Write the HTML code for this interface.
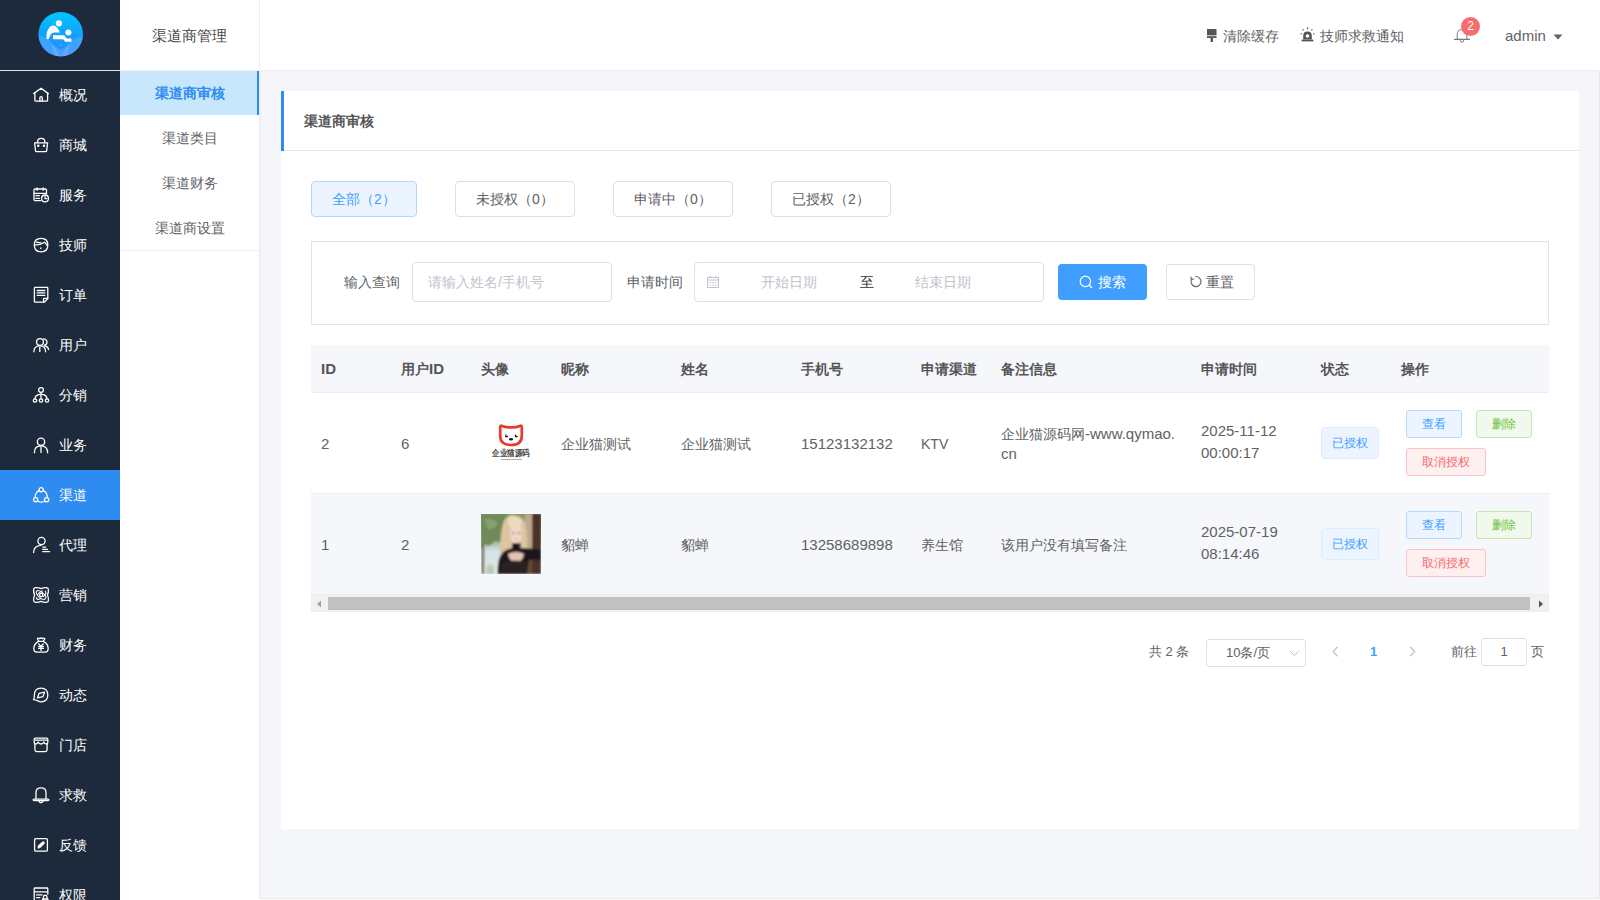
<!DOCTYPE html>
<html><head><meta charset="utf-8">
<style>
*{margin:0;padding:0;box-sizing:border-box}
html,body{width:1600px;height:900px;overflow:hidden;background:#fff;font-family:"Liberation Sans",sans-serif;font-size:14px;color:#606266}
.a{position:absolute;white-space:nowrap}
#side{position:absolute;left:0;top:0;width:120px;height:900px;background:#1d2a3b;overflow:hidden}
#logo{position:absolute;left:0;top:0;width:120px;height:71px;border-bottom:1px solid #e4e4e4}
.mi{position:absolute;left:0;width:120px;height:50px;color:#fff}
.mi.act{background:#2e8bf0}
.mi svg{position:absolute;left:30px;top:14px;width:22px;height:22px;fill:none;stroke:#fff;stroke-width:1.3;stroke-linecap:round;stroke-linejoin:round}
.mi span{position:absolute;left:59px;top:0;line-height:50px;font-size:14px}
#sub{position:absolute;left:120px;top:0;width:140px;height:899px;background:#fff;border-right:1px solid #eee}
#subhd{position:absolute;left:0;top:0;width:139px;height:71px;border-bottom:1px solid #eee;text-align:center;line-height:72px;font-size:15px;color:#4a4a4a}
.si{position:absolute;left:0;width:139px;height:45px;line-height:45px;text-align:center;color:#606266;font-size:14px}
.si.act{background:#c9e7fc;color:#2e8bf0;height:44px;line-height:44px;font-weight:bold}
.si.act:after{content:"";position:absolute;right:0;top:0;width:2px;height:44px;background:#2e8bf0}
#subend{position:absolute;left:0;top:250px;width:139px;height:1px;background:#eee}
#top{position:absolute;left:260px;top:0;width:1340px;height:71px;background:#fff;border-bottom:1px solid #eee}
#main{position:absolute;left:260px;top:71px;width:1340px;height:828px;border-left:1px solid #efefef;border-right:1px solid #e8e8e8;border-bottom:1px solid #e8e8e8;background:#f4f6f9}
#card{position:absolute;left:281px;top:91px;width:1298px;height:738px;background:#fff}
#cardhd{position:absolute;left:0;top:0;width:1298px;height:60px;border-bottom:1px solid #e6e6e6}
#cardhd:before{content:"";position:absolute;left:0;top:0;width:3px;height:60px;background:#2e8bf0}
.tab{position:absolute;top:90px;height:36px;border:1px solid #dcdfe6;border-radius:4px;text-align:center;line-height:34px;color:#606266;font-size:14px;background:#fff}
.tab.act{background:#ecf5ff;border-color:#b3d8ff;color:#409eff}
.inp{position:absolute;border:1px solid #dcdfe6;border-radius:4px;background:#fff}
.btn{position:absolute;border-radius:4px;text-align:center;font-size:14px}
.th{position:absolute;top:0;line-height:48px;font-weight:bold;color:#555;font-size:14px}
.td{position:absolute;color:#606266;font-size:14px;line-height:18px}
i.L{font-style:normal;font-size:15px}
.sb{position:absolute;height:28px;line-height:26px;border-radius:3px;font-size:12px;text-align:center;border:1px solid}
.sb.v{background:#ecf5ff;border-color:#b3d8ff;color:#409eff}
.sb.d{background:#f0f9eb;border-color:#c2e7b0;color:#67c23a}
.sb.c{background:#fef0f0;border-color:#fbc4c4;color:#f56c6c}
.tag{position:absolute;width:58px;height:32px;line-height:30px;border:1px solid #d9ecff;background:#ecf5ff;color:#409eff;border-radius:4px;font-size:12px;text-align:center}
</style></head><body>
<div id="side">
  <div id="logo">
    <svg class="a" style="left:34px;top:8px" width="54" height="54" viewBox="0 0 54 54">
      <defs>
        <linearGradient id="lg" x1="0" y1="0" x2="0" y2="1"><stop offset="0" stop-color="#00c8fe"/><stop offset="0.55" stop-color="#159cff"/><stop offset="1" stop-color="#2f8dff"/></linearGradient>
        <clipPath id="cc"><circle cx="26.7" cy="26.25" r="22.3"/></clipPath>
      </defs>
      <circle cx="26.7" cy="26.25" r="22.3" fill="url(#lg)"/>
      <g clip-path="url(#cc)">
      <path d="M3 27.8 Q14 28.5 19 36 Q23 43 26.7 49 L0 49 Z" fill="#ffffff" opacity="0.13"/>
      <path d="M50.4 27.8 Q39.4 28.5 34.4 36 Q30.4 43 26.7 49 L54 49 Z" fill="#ffffff" opacity="0.13"/>
      <path d="M17.8 36.5 L26.7 41.8 L35.6 36.5 L33 49 L20.4 49Z" fill="#ffffff" opacity="0.14"/>
      <path d="M25.6 37.6 L26.7 35.8 L27.8 37.6Z" fill="#ffffff" opacity="0.35"/>
      </g>
      <circle cx="24.9" cy="15.3" r="3.1" fill="#fff"/>
      <circle cx="34.4" cy="24.6" r="3.0" fill="#fff"/>
      <path d="M12.4 30.6 Q12 23 15.8 19 Q18.6 16.6 21.6 18.2 Q24 19.6 26 24.4 L20 24.4 Q17.6 24.6 16.4 27 L14.8 30.8 Q13.6 31.6 12.4 30.6Z" fill="#fff"/>
      <path d="M19 27.2 L30.4 27.2 L32.6 30.4 L37.4 30.4 L37.4 33.8 L31.4 33.8 L29 31.2 L19 31.2Z" fill="#fff"/>
    </svg>
  </div>
  <div class="mi" style="top:70px"><svg viewBox="0 0 22 22"><path d="M3.6 9.6 L11 4.2 L18.4 9.6"/><path d="M4.9 9.2 V16.2 Q4.9 17.2 5.9 17.2 H16.6 Q17.6 17.2 17.6 16.2 V9.2"/><path d="M9.9 17.2 V13.6 Q9.9 12.6 11.1 12.6 Q12.3 12.6 12.3 13.6 V17.2"/></svg><span>概况</span></div>
  <div class="mi" style="top:120px"><svg viewBox="0 0 22 22"><path d="M7.6 8.6 V7.8 Q7.6 4.4 11.2 4.4 Q14.8 4.4 14.8 7.8 V8.6"/><path d="M4.6 8.8 H17.6 L16.7 16.6 Q16.6 17.6 15.6 17.6 H6.6 Q5.6 17.6 5.5 16.6Z"/><circle cx="8.3" cy="11.7" r="0.6" fill="#fff"/><circle cx="14" cy="11.7" r="0.6" fill="#fff"/></svg><span>商城</span></div>
  <div class="mi" style="top:170px"><svg viewBox="0 0 22 22"><path d="M10.5 16.6 H5 Q4 16.6 4 15.6 V6 Q4 5 5 5 H15.5 Q16.5 5 16.5 6 V10"/><path d="M4 9.3 H15.5"/><path d="M7.1 3.8 V6.3 M13.1 3.8 V6.3"/><path d="M5.9 11.7 H9.4 M5.9 14.4 H9.4"/><circle cx="15" cy="14.4" r="3.4"/><path d="M15 12.4 V14.6 H16.8"/></svg><span>服务</span></div>
  <div class="mi" style="top:220px"><svg viewBox="0 0 22 22"><path d="M11 4.3 C16 4.3 17.8 6.5 17.8 11 C17.8 15.8 15.8 17.8 11 17.8 C6.2 17.8 4.3 15.8 4.3 11 C4.3 6.5 6 4.3 11 4.3Z"/><path d="M5 10.8 Q9 11.6 14.5 8.2 Q16 10 16.8 11"/><path d="M6.5 8.2 L11 8.8"/><path d="M10.8 13.8 V14.6"/></svg><span>技师</span></div>
  <div class="mi" style="top:270px"><svg viewBox="0 0 22 22"><path d="M14.2 18.2 H5.2 Q4.4 18.2 4.4 17.4 V4.2 Q4.4 3.4 5.2 3.4 H17 Q17.8 3.4 17.8 4.2 V14.6Z"/><path d="M13.6 18 V14.4 H17.6"/><path d="M7.2 6.5 H14.8 M7.2 8.9 H14.8 M7.2 11.4 H14.8"/></svg><span>订单</span></div>
  <div class="mi" style="top:320px"><svg viewBox="0 0 22 22"><circle cx="10" cy="8" r="3.4"/><path d="M3.9 17.8 Q3.9 11.8 9.8 11.8 Q15.6 11.8 15.6 17.8"/><path d="M9.8 13.4 V17.4"/><path d="M13.6 4.9 Q17 5.2 17 8.3 Q17 10.8 14.2 11.4"/><path d="M14.8 12 Q18.4 12.8 18.5 15.6"/></svg><span>用户</span></div>
  <div class="mi" style="top:370px"><svg viewBox="0 0 22 22"><circle cx="11" cy="6" r="2.4"/><path d="M11 8.4 V14.8"/><path d="M5 14.8 Q5.2 10.4 11 10.4 Q16.8 10.4 17 14.8"/><circle cx="5" cy="16.5" r="1.7"/><circle cx="11" cy="16.5" r="1.7"/><circle cx="17" cy="16.5" r="1.7"/></svg><span>分销</span></div>
  <div class="mi" style="top:420px"><svg viewBox="0 0 22 22"><circle cx="11" cy="7.8" r="3.7"/><path d="M4.4 18.8 Q4.4 11.8 11 11.8 Q17.6 11.8 17.6 18.8"/><path d="M11 13.4 V18.6"/></svg><span>业务</span></div>
  <div class="mi act" style="top:470px"><svg viewBox="0 0 22 22"><circle cx="11.2" cy="5.8" r="2.1"/><circle cx="5.7" cy="15.8" r="2.1"/><circle cx="16.6" cy="15.8" r="2.1"/><path d="M8.9 6.6 Q5.2 8.6 5.1 13.6"/><path d="M13.5 6.6 Q17.3 8.6 17.3 13.6"/><path d="M7.8 17.2 Q11.2 19.2 14.5 17.2"/></svg><span>渠道</span></div>
  <div class="mi" style="top:520px"><svg viewBox="0 0 22 22"><circle cx="11.5" cy="7" r="3.6"/><path d="M3.6 18.6 Q3.6 11.8 11 11.3"/><path d="M12.8 13.1 H15.6 M12.8 15.4 H17.4 M12.8 17.6 H19.6"/></svg><span>代理</span></div>
  <div class="mi" style="top:570px"><svg viewBox="0 0 22 22"><path d="M5.5 3.6 Q8.5 3.4 11 4.6 Q13.5 3.4 16.5 3.6 Q18.4 3.8 18.4 5.8 Q18.6 8.5 17.4 11 Q18.6 13.5 18.4 16.2 Q18.4 18.2 16.5 18.4 Q13.5 18.6 11 17.4 Q8.5 18.6 5.5 18.4 Q3.6 18.2 3.6 16.2 Q3.4 13.5 4.6 11 Q3.4 8.5 3.6 5.8 Q3.6 3.8 5.5 3.6Z"/><circle cx="11.2" cy="11" r="1.6"/><ellipse cx="11" cy="11" rx="5.8" ry="2.8" transform="rotate(40 11 11)" stroke-width="1.1"/><ellipse cx="11" cy="11" rx="5.8" ry="2.8" transform="rotate(-40 11 11)" stroke-width="1.1" stroke-dasharray="6 3"/></svg><span>营销</span></div>
  <div class="mi" style="top:620px"><svg viewBox="0 0 22 22"><path d="M8.6 7.2 L7.4 4.6 Q8.6 3.6 9.6 4.6 Q11 3.4 12.4 4.6 Q13.6 3.6 14.8 4.6 L13.4 7.2"/><path d="M8.6 7.4 H13.4"/><path d="M8.6 7.4 Q3.8 10 3.8 14.6 Q3.8 18.2 7 18.2 H15 Q18.2 18.2 18.2 14.6 Q18.2 10 13.4 7.4"/><path d="M8.8 10 L11 12.4 L13.2 10 M8.6 12.6 H13.4 M8.6 14.4 H13.4 M11 12.4 V16.6"/></svg><span>财务</span></div>
  <div class="mi" style="top:670px"><svg viewBox="0 0 22 22"><path d="M3.4 15.6 Q4.6 14.2 4.4 11 Q4.4 4.2 11 4.2 Q17.8 4.2 17.8 11 Q17.8 17.8 11 17.8 Q8.5 17.8 7.2 16.6 Q5.8 15.8 3.4 15.6Z"/><path d="M7.6 13.8 L9 9.4 L14.6 8.2 L13 12.6Z"/></svg><span>动态</span></div>
  <div class="mi" style="top:720px"><svg viewBox="0 0 22 22"><path d="M5.2 4.2 H16.8 Q17.8 4.2 17.8 5.2 V8.6 Q17.8 10 16.4 10 Q14.4 10 13.8 8 Q13 10 11 10 Q9 10 8.2 8 Q7.6 10 5.6 10 Q4.2 10 4.2 8.6 V5.2 Q4.2 4.2 5.2 4.2Z"/><path d="M5.4 6.2 H16.6"/><path d="M4.9 10 V15.8 Q4.9 17.6 6.7 17.6 H15.3 Q17.1 17.6 17.1 15.8 V10"/></svg><span>门店</span></div>
  <div class="mi" style="top:770px"><svg viewBox="0 0 22 22"><path d="M6 14.8 V8.6 Q6 3.8 11 3.8 Q16 3.8 16 8.6 V14.8"/><path d="M4 15.2 Q3 15.2 3.2 16 Q3.4 16.6 4.2 16.6 H17.8 Q18.6 16.6 18.8 16 Q19 15.2 18 15.2Z"/><path d="M9 16.6 Q9 18.6 11 18.6 Q13 18.6 13 16.6"/></svg><span>求救</span></div>
  <div class="mi" style="top:820px"><svg viewBox="0 0 22 22"><rect x="4.6" y="4.6" width="12.8" height="12.6" rx="1.2"/><path d="M8.2 13.8 L8.4 12 L12.6 8.2 Q13.4 7.6 14 8.3 Q14.5 9 13.8 9.6 L9.8 13.6Z" fill="#fff"/></svg><span>反馈</span></div>
  <div class="mi" style="top:870px"><svg viewBox="0 0 22 22"><path d="M11 17 H5 Q4.2 17 4.2 16.2 V4.8 Q4.2 4 5 4 H17 Q17.8 4 17.8 4.8 V10"/><path d="M4.6 7.8 H17.4"/><path d="M6.6 10.9 H12 M6.6 13.7 H9.8"/><path d="M13.4 15 V13.4 Q13.4 11.2 15.2 11.2 Q17 11.2 17 13.4 V15"/><rect x="12.4" y="15" width="5.6" height="4" rx="0.6"/></svg><span>权限</span></div>
</div>
<div id="sub">
  <div id="subhd">渠道商管理</div>
  <div class="si act" style="top:71px">渠道商审核</div>
  <div class="si" style="top:116px">渠道类目</div>
  <div class="si" style="top:161px">渠道财务</div>
  <div class="si" style="top:206px">渠道商设置</div>
  <div id="subend"></div>
</div>
<div id="top">
  <svg class="a" style="left:947px;top:29px" width="10" height="13" viewBox="0 0 10 13"><rect x="0" y="0" width="9.5" height="6.4" fill="#555"/><rect x="0" y="7.2" width="9.5" height="1.8" fill="#555"/><rect x="3.6" y="9" width="2.4" height="4" fill="#555"/></svg>
  <span class="a" style="left:963px;top:27px;line-height:18px;color:#606266">清除缓存</span>
  <svg class="a" style="left:1040px;top:27px" width="15" height="15" viewBox="0 0 15 15"><path d="M3.2 12.4 V9 Q3.2 4.6 7.5 4.6 Q11.8 4.6 11.8 9 V12.4" fill="#555"/><circle cx="7.5" cy="9" r="1.8" fill="#fff"/><rect x="1.6" y="12.6" width="11.8" height="1.8" fill="#555"/><path d="M7.5 0.6 V2.2 M2.6 2.4 L3.6 3.4 M12.4 2.4 L11.4 3.4 M0.6 6.8 H1.8 M13.2 6.8 H14.4" stroke="#555" stroke-width="1.2"/></svg>
  <span class="a" style="left:1060px;top:27px;line-height:18px;color:#606266">技师求救通知</span>
  <svg class="a" style="left:1193px;top:26px" width="18" height="18" viewBox="0 0 18 18"><path d="M4.2 13 V8.5 Q4.2 3.6 9 3.6 Q13.8 3.6 13.8 8.5 V13" fill="none" stroke="#7a7a7a" stroke-width="1"/><path d="M1.6 13.4 H16.4" stroke="#7a7a7a" stroke-width="1.3" stroke-linecap="round"/><path d="M7.2 14 Q7.2 16.2 9 16.2 Q10.8 16.2 10.8 14" fill="none" stroke="#7a7a7a" stroke-width="1"/></svg>
  <div class="a" style="left:1201px;top:17px;width:19px;height:19px;border-radius:50%;background:#f56c6c;color:#fff;font-size:12px;line-height:19px;text-align:center">2</div>
  <span class="a" style="left:1245px;top:27px;line-height:18px;font-size:15px;color:#606266">admin</span>
  <svg class="a" style="left:1293px;top:34px" width="10" height="6" viewBox="0 0 10 6"><path d="M0.5 0.5 H9.5 L5 5.5Z" fill="#606266"/></svg>
</div>
<div id="main"></div>
<div id="card">
  <div id="cardhd"><span class="a" style="left:23px;top:0;line-height:60px;font-weight:bold;color:#555;font-size:14px">渠道商审核</span></div>
  <div class="tab act" style="left:30px;width:106px">全部（2）</div>
  <div class="tab" style="left:174px;width:120px">未授权（0）</div>
  <div class="tab" style="left:332px;width:120px">申请中（0）</div>
  <div class="tab" style="left:490px;width:120px">已授权（2）</div>
  <div class="a" style="left:30px;top:150px;width:1238px;height:84px;border:1px solid #e3e3e3"></div>
  <span class="a" style="left:63px;top:182px;line-height:18px;color:#606266">输入查询</span>
  <div class="inp" style="left:131px;top:171px;width:200px;height:40px"><span class="a" style="left:15px;top:10px;line-height:18px;color:#c0c4cc">请输入姓名/手机号</span></div>
  <span class="a" style="left:346px;top:182px;line-height:18px;color:#606266">申请时间</span>
  <div class="inp" style="left:413px;top:171px;width:350px;height:40px">
    <svg class="a" style="left:11px;top:12px" width="14" height="14" viewBox="0 0 14 14"><rect x="1.5" y="2.5" width="11" height="10" fill="none" stroke="#c0c4cc" stroke-width="1"/><path d="M1.5 5 H12.5 M4 1 V3 M10 1 V3" stroke="#c0c4cc" stroke-width="1"/><path d="M3.5 7.5 H5 M6.3 7.5 H7.8 M9 7.5 H10.5 M3.5 10 H5 M6.3 10 H7.8 M9 10 H10.5" stroke="#c0c4cc" stroke-width="1"/></svg>
    <span class="a" style="left:66px;top:10px;line-height:18px;color:#c0c4cc">开始日期</span>
    <span class="a" style="left:165px;top:10px;line-height:18px;color:#303133">至</span>
    <span class="a" style="left:220px;top:10px;line-height:18px;color:#c0c4cc">结束日期</span>
  </div>
  <div class="btn" style="left:777px;top:173px;width:89px;height:36px;background:#409eff;color:#fff;line-height:36px">
    <svg class="a" style="left:21px;top:11px" width="14" height="14" viewBox="0 0 14 14"><circle cx="6.4" cy="6.4" r="5.2" fill="none" stroke="#fff" stroke-width="1.2"/><path d="M10.2 10.2 L13 13" stroke="#fff" stroke-width="1.3"/></svg>
    <span class="a" style="left:40px;top:0">搜索</span>
  </div>
  <div class="btn" style="left:885px;top:173px;width:89px;height:36px;border:1px solid #dcdfe6;background:#fff;color:#606266;line-height:34px">
    <svg class="a" style="left:22px;top:10px" width="13" height="13" viewBox="0 0 13 13"><path d="M2.6 4.2 A5 5 0 1 0 6.5 1.6" fill="none" stroke="#606266" stroke-width="1.1"/><path d="M1.8 1.6 L2.4 4.6 L5.2 3.8" fill="none" stroke="#606266" stroke-width="1.1"/></svg>
    <span class="a" style="left:39px;top:0">重置</span>
  </div>
  <!-- table -->
  <div class="a" style="left:30px;top:254px;width:1238px;height:267px;overflow:hidden">
    <div class="a" style="left:0;top:0;width:1238px;height:48px;background:#f5f7fa;border-bottom:1px solid #ebeef5">
      <span class="th" style="left:10px"><i class="L">ID</i></span>
      <span class="th" style="left:90px">用户<i class="L">ID</i></span>
      <span class="th" style="left:170px">头像</span>
      <span class="th" style="left:250px">昵称</span>
      <span class="th" style="left:370px">姓名</span>
      <span class="th" style="left:490px">手机号</span>
      <span class="th" style="left:610px">申请渠道</span>
      <span class="th" style="left:690px">备注信息</span>
      <span class="th" style="left:890px">申请时间</span>
      <span class="th" style="left:1010px">状态</span>
      <span class="th" style="left:1090px">操作</span>
    </div>
    <div class="a" style="left:0;top:48px;width:1238px;height:101px;background:#fff;border-bottom:1px solid #ebeef5">
      <span class="td" style="left:10px;top:42px"><i class="L">2</i></span>
      <span class="td" style="left:90px;top:42px"><i class="L">6</i></span>
      <div class="a" style="left:170px;top:20px;width:60px;height:60px;background:#fff">
        <svg width="60" height="60" viewBox="0 0 60 60"><path d="M19.2 14.2 Q19.2 12 21.2 13 Q25 14.6 30 14.4 Q35 14.6 38.8 13 Q40.8 12 40.8 14.2 V23 Q40.8 32 30 32 Q19.2 32 19.2 23Z" fill="none" stroke="#e8392a" stroke-width="2.7" stroke-linejoin="round"/><circle cx="25.6" cy="22.8" r="1.6" fill="#1a1a1a"/><circle cx="26.3" cy="22" r="1.1" fill="#fff"/><circle cx="35.3" cy="22.8" r="1.6" fill="#1a1a1a"/><circle cx="36" cy="22" r="1.1" fill="#fff"/><ellipse cx="30" cy="26.2" rx="2" ry="1.3" fill="#111"/><text x="30" y="43.4" font-size="8.6" text-anchor="middle" fill="#444" font-weight="bold" font-family="Liberation Serif" textLength="37.5" lengthAdjust="spacingAndGlyphs">企业猫源码</text><rect x="19.5" y="46" width="21.5" height="0.8" fill="#999"/></svg>
      </div>
      <span class="td" style="left:250px;top:42px">企业猫测试</span>
      <span class="td" style="left:370px;top:42px">企业猫测试</span>
      <span class="td" style="left:490px;top:42px"><i class="L">15123132132</i></span>
      <span class="td" style="left:610px;top:42px">KTV</span>
      <span class="td" style="left:690px;top:31px;line-height:19px">企业猫源码网<i class="L">-www.qymao.</i><br><i class="L">cn</i></span>
      <span class="td" style="left:890px;top:27px;line-height:22px"><i class="L">2025-11-12</i><br><i class="L">00:00:17</i></span>
      <div class="tag" style="left:1010px;top:34px">已授权</div>
      <div class="sb v" style="left:1095px;top:17px;width:56px">查看</div>
      <div class="sb d" style="left:1165px;top:17px;width:56px">删除</div>
      <div class="sb c" style="left:1095px;top:55px;width:80px">取消授权</div>
    </div>
    <div class="a" style="left:0;top:149px;width:1238px;height:101px;background:#f5f7fa;border-bottom:1px solid #ebeef5">
      <span class="td" style="left:10px;top:42px"><i class="L">1</i></span>
      <span class="td" style="left:90px;top:42px"><i class="L">2</i></span>
      <div class="a" style="left:170px;top:20px;width:60px;height:60px;overflow:hidden">
        <svg width="60" height="60" viewBox="0 0 60 60"><defs><linearGradient id="bg1" x1="0" y1="0" x2="0" y2="1"><stop offset="0" stop-color="#7f9868"/><stop offset="0.45" stop-color="#a3b8a4"/><stop offset="0.62" stop-color="#d3e2e6"/><stop offset="1" stop-color="#dfe8e2"/></linearGradient><filter id="bl" x="-10%" y="-10%" width="120%" height="120%"><feGaussianBlur stdDeviation="0.9"/></filter></defs>
        <rect width="60" height="60" fill="url(#bg1)"/>
        <g filter="url(#bl)">
        <path d="M0 0 H28 V24 Q22 30 14 27 Q8 34 3 30 L0 34Z" fill="#6f895a"/>
        <path d="M3 6 Q10 3 17 9 Q14 16 7 15Z" fill="#8da676" opacity="0.8"/>
        <rect x="1" y="30" width="1.8" height="30" fill="#5a5440"/>
        <path d="M5 54 Q9 47 13 53 L13 60 L5 60Z" fill="#b4c4ae" opacity="0.8"/>
        <rect x="44" y="0" width="16" height="60" fill="#6a4a35"/>
        <rect x="44" y="0" width="7" height="40" fill="#c6b096"/>
        <path d="M44.5 3 H50.5 M44.5 7 H50.5 M44.5 11 H50.5 M44.5 15 H50.5 M44.5 19 H50.5 M44.5 23 H50.5 M44.5 27 H50.5 M44.5 31 H50.5 M44.5 35 H50.5" stroke="#a18a70" stroke-width="0.9"/>
        <rect x="51" y="0" width="9" height="60" fill="#4a3326"/>
        <path d="M30 1 Q42 0 45 12 Q47 28 46 40 L45 56 L38 42 L27 42 L20 50 Q18 30 21 14 Q23 2 30 1Z" fill="#dcc69f"/>
        <path d="M28 3 Q36 1 41 7 L39 13 Q33 9 29 13 Q26 8 28 3Z" fill="#ecdcbf"/>
        <path d="M29.5 12.5 Q35 9.5 40.5 13.5 Q42 23 38 29 Q35 31.5 32 29.5 Q28 24 29.5 12.5Z" fill="#f0d7c9"/>
        <path d="M30.8 19 H33.8 M36.6 19 H39.6" stroke="#5e5a58" stroke-width="1.1"/>
        <path d="M33.6 25.4 Q35.2 24.6 36.8 25.4 Q35.2 26.4 33.6 25.4Z" fill="#c86c6c"/>
        <path d="M31 29 H39.5 V37 H31Z" fill="#1c1617"/>
        <path d="M17 60 Q17 44 22 38 Q28 34 32 34 L40 34 Q50 34 60 35.5 L60 46 L48 46 L46 60Z" fill="#1f191a"/>
        <path d="M27 40 Q35 36 43 40 Q42 47 35 49 Q28 47 27 40Z" fill="#e6c6b2"/>
        <path d="M22 48 Q35 45 46 48 L46 60 L19 60Z" fill="#2b2222"/>
        </g></svg>
      </div>
      <span class="td" style="left:250px;top:42px">貂蝉</span>
      <span class="td" style="left:370px;top:42px">貂蝉</span>
      <span class="td" style="left:490px;top:42px"><i class="L">13258689898</i></span>
      <span class="td" style="left:610px;top:42px">养生馆</span>
      <span class="td" style="left:690px;top:42px">该用户没有填写备注</span>
      <span class="td" style="left:890px;top:27px;line-height:22px"><i class="L">2025-07-19</i><br><i class="L">08:14:46</i></span>
      <div class="tag" style="left:1010px;top:34px">已授权</div>
      <div class="sb v" style="left:1095px;top:17px;width:56px">查看</div>
      <div class="sb d" style="left:1165px;top:17px;width:56px">删除</div>
      <div class="sb c" style="left:1095px;top:55px;width:80px">取消授权</div>
    </div>
    <div class="a" style="left:0;top:250px;width:1238px;height:17px;background:#f1f1f1;border-bottom:1px solid #ebeef5">
      <svg class="a" style="left:5px;top:5px" width="6" height="8" viewBox="0 0 6 8"><path d="M5 0.5 V7.5 L1 4Z" fill="#a3a3a3"/></svg>
      <div class="a" style="left:17px;top:2px;width:1202px;height:13px;background:#c1c1c1"></div>
      <svg class="a" style="left:1227px;top:5px" width="6" height="8" viewBox="0 0 6 8"><path d="M1 0.5 V7.5 L5 4Z" fill="#505050"/></svg>
    </div>
  </div>
  <!-- pagination -->
  <span class="a" style="left:868px;top:552px;line-height:18px;color:#606266;font-size:13px">共 2 条</span>
  <div class="inp" style="left:925px;top:548px;width:100px;height:28px;border-radius:3px"><span class="a" style="left:19px;top:4px;line-height:18px;font-size:13px;color:#606266">10条/页</span><svg class="a" style="left:82px;top:10px" width="11" height="7" viewBox="0 0 11 7"><path d="M1 1 L5.5 5.5 L10 1" fill="none" stroke="#c0c4cc" stroke-width="1"/></svg></div>
  <svg class="a" style="left:1050px;top:555px" width="9" height="11" viewBox="0 0 9 11"><path d="M6.6 0.8 L2.2 5.5 L6.6 10.2" fill="none" stroke="#c0c4cc" stroke-width="1.3"/></svg>
  <span class="a" style="left:1089px;top:552px;line-height:18px;color:#409eff;font-weight:bold;font-size:13px">1</span>
  <svg class="a" style="left:1127px;top:555px" width="9" height="11" viewBox="0 0 9 11"><path d="M2.2 0.8 L6.6 5.5 L2.2 10.2" fill="none" stroke="#c0c4cc" stroke-width="1.3"/></svg>
  <span class="a" style="left:1170px;top:552px;line-height:18px;color:#606266;font-size:13px">前往</span>
  <div class="inp" style="left:1200px;top:547px;width:46px;height:28px;border-radius:3px;text-align:center;line-height:26px;color:#606266;font-size:13px">1</div>
  <span class="a" style="left:1250px;top:552px;line-height:18px;color:#606266;font-size:13px">页</span>
</div>
</body></html>
